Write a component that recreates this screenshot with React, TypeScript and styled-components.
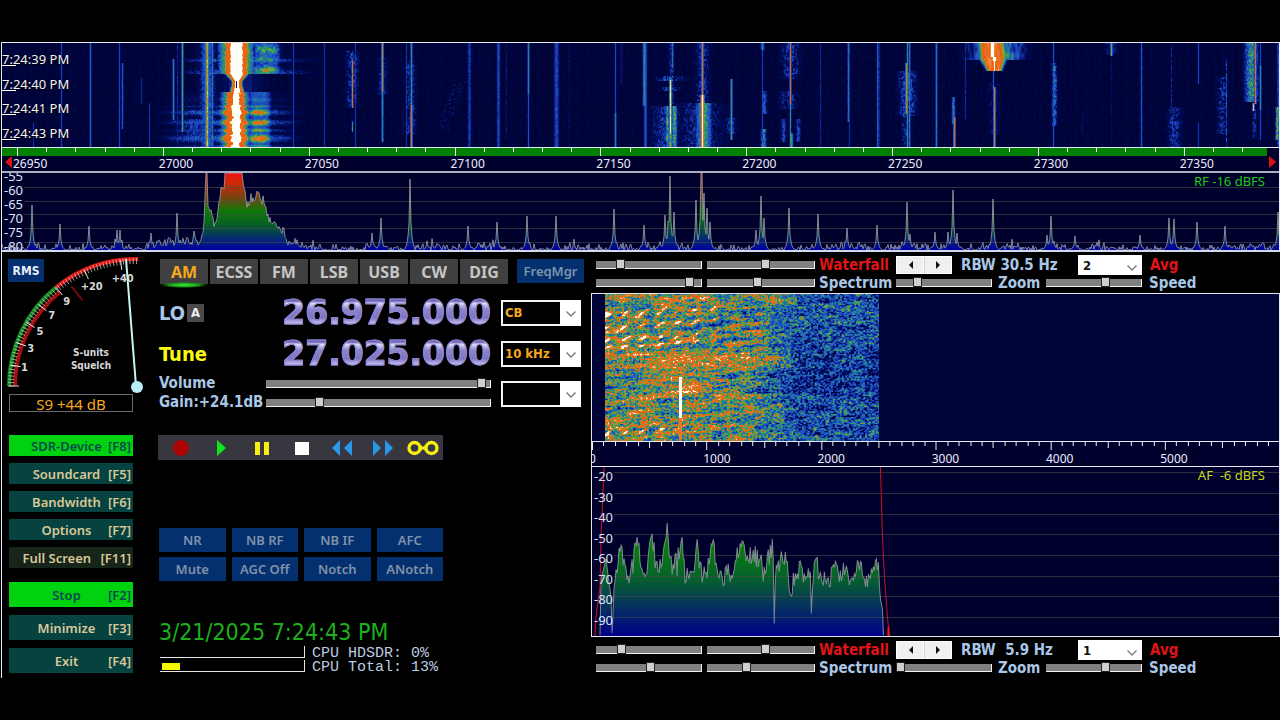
import React, { useMemo, useState } from "react";
import styled, { createGlobalStyle, css } from "styled-components";

/* ---------- theme values ---------- */

const sans = `"Noto Sans", "Open Sans", sans-serif`;
const wide = `"DejaVu Sans Condensed", "DejaVu Sans", "Noto Sans", sans-serif`;
const mono = `"Liberation Mono", "Courier New", monospace`;

const color = {
  ice: "#a9c6e6",
  navy: "#00002c",
  line: "#e6e6f4",
  orange: "#f5a91c",
  blueButton: "#04306f",
  green: "#00d210",
  teal: "#06423f",
};

const GlobalStyle = createGlobalStyle`
  *, *::before, *::after { box-sizing: border-box; }
  body { margin: 0; background: #000; color: #ddd; font-family: ${sans}; }
  button, select, input { font-family: inherit; margin: 0; }
  ol, ul { list-style: none; margin: 0; padding: 0; }
`;

/* ---------- heat map helpers ---------- */

type Heat = (x: number, y: number) => number;

const LEVELS = 28;

const stops: [number, number, number, number][] = [
  [0, 0, 0, 46],
  [0.15, 0, 12, 88],
  [0.3, 28, 68, 196],
  [0.42, 34, 112, 176],
  [0.53, 50, 160, 84],
  [0.62, 150, 160, 50],
  [0.7, 232, 92, 16],
  [0.84, 240, 120, 40],
  [0.92, 255, 224, 170],
  [1, 255, 255, 250],
];

function heatColor(level: number) {
  const v = level / (LEVELS - 1);
  let i = 1;
  while (i < stops.length - 1 && stops[i][0] < v) i++;
  const a = stops[i - 1];
  const b = stops[i];
  const t = (v - a[0]) / (b[0] - a[0]);
  const mix = (k: number) => Math.round(a[k] + (b[k] - a[k]) * t);
  return `rgb(${mix(1)},${mix(2)},${mix(3)})`;
}

function hash(x: number, y: number) {
  let h = (Math.imul(x | 0, 374761393) + Math.imul(y | 0, 668265263)) | 0;
  h = Math.imul(h ^ (h >>> 13), 1274126177);
  return ((h ^ (h >>> 16)) >>> 0) / 4294967295;
}

function smooth(x: number, y: number) {
  const xi = Math.floor(x);
  const yi = Math.floor(y);
  const fx = x - xi;
  const fy = y - yi;
  const sx = fx * fx * (3 - 2 * fx);
  const sy = fy * fy * (3 - 2 * fy);
  const top = hash(xi, yi) * (1 - sx) + hash(xi + 1, yi) * sx;
  const bottom = hash(xi, yi + 1) * (1 - sx) + hash(xi + 1, yi + 1) * sx;
  return top * (1 - sy) + bottom * sy;
}

const bell = (d: number, w: number) => Math.exp(-((d / w) * (d / w)));

function heatPaths(width: number, height: number, cell: number, heat: Heat) {
  const paths: string[][] = Array.from({ length: LEVELS }, () => []);
  for (let x = 0; x < width; x += cell) {
    let start = 0;
    let last = -1;
    for (let y = 0; y <= height; y++) {
      const v = y < height ? Math.max(0, Math.min(1, heat(x, y))) : -1;
      const level = v < 0 ? -1 : Math.round(v * (LEVELS - 1));
      if (level !== last) {
        if (last > 0) paths[last].push(`M${x} ${start}h${cell}v${y - start}h-${cell}z`);
        start = y;
        last = level;
      }
    }
  }
  return paths.map((p) => p.join(""));
}

/* ---------- RF waterfall content ---------- */

interface Carrier {
  x: number;
  v: number;
  w?: number;
  from?: number;
  to?: number;
  rough?: number;
}

const carriers: Carrier[] = [
  { x: 31, v: 0.3, from: 80, rough: 0.6 },
  { x: 59, v: 0.3 },
  { x: 88, v: 0.38 },
  { x: 117, v: 0.3 },
  { x: 120, v: 0.36, from: 20, to: 85 },
  { x: 139, v: 0.24, from: 35, to: 60 },
  { x: 147, v: 0.26, from: 60 },
  { x: 171, v: 0.48, from: 16, to: 76 },
  { x: 175, v: 0.27, rough: 0.4 },
  { x: 180, v: 0.56, to: 88 },
  { x: 204, v: 0.6, w: 2, rough: 0.15 },
  { x: 205, v: 0.46, w: 6, rough: 0.5 },
  { x: 205, v: 0.9 },
  { x: 210, v: 0.44 },
  { x: 192, v: 0.36, w: 12, from: 76, to: 95, rough: 0.7 },
  { x: 291, v: 0.28 },
  { x: 322, v: 0.25 },
  { x: 350, v: 0.76, w: 1, from: 17, to: 64, rough: 0.2 },
  { x: 350, v: 0.42, w: 5, from: 8, to: 64, rough: 0.95 },
  { x: 350, v: 0.6, w: 1, from: 78, to: 88, rough: 0.5 },
  { x: 353, v: 0.26 },
  { x: 380, v: 0.72, to: 48, rough: 0.15 },
  { x: 380, v: 0.5, from: 48, to: 98 },
  { x: 380, v: 0.36, w: 4, from: 15, to: 50, rough: 0.9 },
  { x: 404, v: 0.3, rough: 0.3 },
  { x: 409, v: 0.54, to: 72, rough: 0.2 },
  { x: 409, v: 0.74, from: 62 },
  { x: 408, v: 0.34, w: 5, from: 18, to: 90, rough: 0.85 },
  { x: 467, v: 0.32, w: 2, rough: 0.3 },
  { x: 496, v: 0.34, w: 2, rough: 0.25 },
  { x: 504, v: 0.22, to: 95, rough: 0.5 },
  { x: 526, v: 0.48, to: 50 },
  { x: 526, v: 0.34 },
  { x: 554, v: 0.34, w: 3, rough: 0.25 },
  { x: 567, v: 0.22, rough: 0.8 },
  { x: 613, v: 0.32, to: 70 },
  { x: 613, v: 0.46, from: 70 },
  { x: 619, v: 0.2, to: 40 },
  { x: 642, v: 0.5, w: 2, to: 62, rough: 0.15 },
  { x: 643, v: 0.36, w: 2 },
  { x: 670, v: 0.5, to: 24, rough: 0.3 },
  { x: 669, v: 0.34, w: 3, to: 60, rough: 0.6 },
  { x: 668, v: 0.62, w: 9, from: 33, to: 37, rough: 0.9 },
  { x: 668, v: 0.56, w: 7, from: 44, to: 47, rough: 0.9 },
  { x: 668, v: 0.8, w: 1, from: 44, to: 56 },
  { x: 668, v: 0.96, from: 37, to: 90 },
  { x: 665, v: 0.66, w: 2, from: 63, rough: 0.5 },
  { x: 672, v: 0.68, w: 3, from: 63, rough: 0.5 },
  { x: 668, v: 0.72, w: 2, from: 90, rough: 0.3 },
  { x: 664, v: 0.34, w: 13, from: 63, rough: 0.7 },
  { x: 700, v: 0.72, to: 58 },
  { x: 700, v: 0.36, w: 6, to: 58, rough: 0.85 },
  { x: 700, v: 1.05, w: 2, from: 52 },
  { x: 701, v: 0.66, w: 6, from: 60, rough: 0.4 },
  { x: 698, v: 0.32, w: 20, from: 60, rough: 0.8 },
  { x: 729, v: 0.54, from: 36, to: 96 },
  { x: 729, v: 0.36, w: 5, from: 75, to: 90, rough: 0.8 },
  { x: 760, v: 0.34, w: 1, rough: 0.3 },
  { x: 762, v: 0.48, w: 3, from: 48, to: 70, rough: 0.7 },
  { x: 761, v: 0.6, w: 3, from: 86, rough: 0.6 },
  { x: 760, v: 0.5, w: 2, to: 6, rough: 0.3 },
  { x: 788, v: 0.74, w: 1, to: 60 },
  { x: 788, v: 0.54, w: 1, from: 60, rough: 0.2 },
  { x: 788, v: 0.36, w: 8, to: 35, rough: 0.85 },
  { x: 786, v: 0.34, w: 8, from: 48, to: 65, rough: 0.9 },
  { x: 781, v: 0.38, w: 3, from: 76, to: 98, rough: 0.6 },
  { x: 796, v: 0.38, w: 3, from: 76, to: 98, rough: 0.6 },
  { x: 789, v: 0.62, w: 2, from: 90, rough: 0.4 },
  { x: 818, v: 0.24, rough: 0.3 },
  { x: 846, v: 0.46, to: 78, rough: 0.2 },
  { x: 847, v: 0.25 },
  { x: 875, v: 0.36, w: 1 },
  { x: 876, v: 0.3, w: 2, rough: 0.3 },
  { x: 904, v: 0.7, from: 20, to: 70, rough: 0.1 },
  { x: 905, v: 0.5, w: 1 },
  { x: 907, v: 0.44 },
  { x: 905, v: 0.46, w: 7, from: 28, to: 72, rough: 0.75 },
  { x: 904, v: 0.36, w: 4, from: 72, rough: 0.8 },
  { x: 934, v: 0.44 },
  { x: 951, v: 0.5, w: 2, from: 54, to: 80, rough: 0.4 },
  { x: 952, v: 0.74, from: 74 },
  { x: 963, v: 0.28, to: 75, rough: 0.4 },
  { x: 991, v: 0.34, from: 25, to: 46 },
  { x: 992, v: 0.72, from: 44 },
  { x: 992, v: 0.24, w: 6, from: 40, to: 90, rough: 0.9 },
  { x: 1051, v: 0.34 },
  { x: 1052, v: 0.52, w: 3, from: 20, to: 82, rough: 0.75 },
  { x: 1080, v: 0.2, from: 70, to: 90, rough: 0.5 },
  { x: 1109, v: 0.62, to: 12 },
  { x: 1109, v: 0.3, w: 6, to: 10, rough: 0.8 },
  { x: 1109, v: 0.2, rough: 0.6 },
  { x: 1139, v: 0.35 },
  { x: 1169, v: 0.3, w: 1, rough: 0.7 },
  { x: 1172, v: 0.36, w: 6, from: 64, rough: 0.85 },
  { x: 1196, v: 0.3, to: 40 },
  { x: 1196, v: 0.27, from: 80 },
  { x: 1224, v: 0.5, w: 1, from: 15, rough: 0.8 },
  { x: 1220, v: 0.34, w: 5, from: 34, to: 90, rough: 0.9 },
  { x: 1249, v: 0.64, w: 5, to: 58, rough: 0.55 },
  { x: 1253, v: 0.8, w: 1, to: 60, rough: 0.2 },
  { x: 1251, v: 0.9, w: 1, from: 60, to: 67 },
  { x: 1252, v: 0.34, w: 3, from: 66, to: 94, rough: 0.8 },
  { x: 1258, v: 0.48, from: 22, to: 66 },
  { x: 1258, v: 0.3, to: 96 },
  { x: 1276, v: 0.36, w: 2, rough: 0.4 },
  { x: 1275, v: 0.8, w: 2, from: 64, to: 96, rough: 0.6 },
];

/* speech bursts of the strong station: row, width, strength */
const bursts: [number, number, number][] = [
  [56, 3, 0.35],
  [63, 1.5, 0.55],
  [69, 3, 0.95],
  [79, 3, 1],
  [87, 2, 0.75],
  [95, 4, 1.05],
  [103, 2, 0.6],
];

function strongStation(x: number, y: number) {
  if (x < 130 || x > 350) return 0;
  const grain = hash(x, y);
  const block = smooth(x / 2, y / 2);
  if (y >= 31 && y < 49) {
    const squeeze = Math.abs(y - 41);
    const half = y < 41 ? 2.5 + Math.max(0, squeeze - 3) * 0.9 : 2.5 + squeeze * 0.3;
    const d = Math.abs(x - 234.5);
    if (x === 234 && squeeze < 4) return 0.15;
    return Math.max(1.1 * Math.exp(-Math.pow(d / half, 4)), 0.78 * Math.exp(-Math.pow(d / (half + 3), 6)), 0.2 * bell(x - 238, 26));
  }
  if (y < 31) {
    const d = x < 233 ? 233 - x : x - 235;
    const trim = block * 2.5;
    const core = 1.2 * Math.exp(-Math.pow(d / (7.5 - trim * 0.6), 4));
    const ring = 0.76 * Math.exp(-Math.pow(d / (13 - trim), 10));
    const halo = 0.53 * Math.exp(-Math.pow(d / (16 + trim), 8)) * (0.88 + 0.2 * grain);
    const row = 0.55 + 0.45 * bell(y - 6, 5) + 0.35 * bell(y - 16, 3) + 0.55 * bell(y - 27, 4);
    const lobe = 0.54 * Math.min(1.1, row) * Math.exp(-Math.pow((x - 264) / 14, 4)) * (0.68 + 0.55 * block);
    const wideBand = (0.3 * bell(y - 17, 2) + 0.32 * bell(y - 30, 4) + 0.12) * bell(x - 240, 58) * (0.6 + 0.7 * grain);
    return Math.max(core, ring, halo, lobe, wideBand);
  }
  const pulse = bursts.reduce((s, [row, w, p]) => Math.max(s, p * bell(y - row, w)), 0.15);
  const d = x < 234 ? 234 - x : (x - 234) * 1.2;
  const core = 1.2 * Math.exp(-Math.pow(d / (4.5 + pulse * 3 + (block - 0.5) * 4), 4));
  const ring = (0.76 + 0.1 * (block - 0.5)) * Math.exp(-Math.pow(d / (10.5 + pulse * 6 + (grain - 0.5) * 2), 8));
  const halo = 0.52 * Math.exp(-Math.pow(d / (15 + pulse * 7), 6)) * (0.85 + 0.25 * grain);
  const lobe = (0.28 + 0.46 * pulse) * Math.exp(-Math.pow((x - 257) / 12, 4)) * (0.82 + 0.35 * block);
  const wideBand = (0.08 + 0.32 * pulse) * Math.exp(-Math.pow((x - 228) / 66, 4)) * (0.6 + 0.55 * grain);
  return Math.max(core, ring, halo, lobe, wideBand);
}

function upperStation(x: number, y: number) {
  if (x < 940 || x > 1040 || y > 27) return 0;
  const d = Math.abs(x - 992 + (y - 27) * -0.12);
  const w = y < 15 ? 14 : 14 - (y - 15) * 0.5;
  const strand = 0.8 + 0.28 * smooth(x / 2, y / 9);
  const core = 0.84 * Math.exp(-Math.pow(d / w, 6)) * strand;
  const white = 1.1 * bell(x - 992 + (y < 14 ? 2 : 0), y < 18 ? 4 : 1.6);
  const side = y < 17 ? 0.6 * bell(x - 994, 26) * (0.45 + 0.8 * smooth(x / 2 + 40, y / 6)) : 0;
  return Math.max(core, white, side);
}

function buildRfHeat(): Heat {
  const byColumn: Carrier[][] = Array.from({ length: 1280 }, () => []);
  carriers.forEach((c) => {
    const reach = Math.max(1, Math.ceil((c.w ?? 0) * 1.8));
    for (let x = Math.max(0, c.x - reach); x <= Math.min(1279, c.x + reach); x++) byColumn[x].push(c);
  });
  return (x, y) => {
    let v = 0.03 + 0.07 * hash(x, y >> 2) * hash(x, 3);
    byColumn[x].forEach((c) => {
      if (y < (c.from ?? 0) || y > (c.to ?? 200)) return;
      const shape = c.w ? bell(x - c.x, c.w) : x === c.x ? 1 : 0.5;
      const rough = c.rough ?? 0.1;
      v = Math.max(v, c.v * (c.w && c.w > 3 ? Math.sqrt(shape) : shape) * (1 - rough * smooth(x * 0.8 + 9, y * 0.6)));
    });
    const diagonal = Math.abs(x - (456 - (y - 42) * 0.36));
    if (y > 38 && y < 88 && diagonal < 6 && hash(x, y) > 0.8) v = Math.max(v, 0.2);
    return Math.max(v, strongStation(x, y), upperStation(x, y));
  };
}

/* ---------- AF waterfall content ---------- */

const voicedRows: [number, number][] = [
  [21, 4],
  [33, 3],
  [46, 3.5],
  [53, 2],
  [139, 3],
];

function afHeat(x: number, y: number) {
  const left = 13;
  const right = 286;
  if (x < left || x > right) return 0.02;
  const t = (x - left) / (right - left);
  let v = t < 0.55 ? 0.52 - t * 0.1 : t < 0.72 ? 0.465 - (t - 0.55) * 0.75 : 0.335;
  v += (smooth(x / 14, y / 2.4 + x / 60) - 0.5) * (t < 0.6 ? 0.36 : 0.22);
  v += (smooth(x / 1.8 + 60, y / 1.4 + 30) - 0.5) * 0.5;
  v += (hash(x + 7, y) - 0.5) * 0.12;
  if (y < 12 && t > 0.05 && t < 0.7) v += 0.14 * bell(y - 5, 6);
  if (t < 0.42 && (y < 60 || y > 130)) {
    voicedRows.forEach(([row, h]) => {
      const slope = row - Math.max(0, t - 0.05) * 22;
      const lane = bell(((x - 22 + (y - row) * 1.1 + 32) % 16.5) - 8, 2.6);
      v += 0.55 * lane * bell(y - slope, h) * (1 - t);
    });
  }
  if (y > 14 && y < 52 && t < 0.6) v += 0.12 * bell(((y + x / 8) % 9) - 4, 2);
  v += 0.24 * bell(y - 66, 10) * (t < 0.68 ? bell(t - 0.45, 0.35) : 0);
  v += 0.24 * bell(y - 62, 7) * bell(t - 0.26, 0.07);
  v += 0.22 * bell(y - 90, 12) * bell(t - 0.27, 0.12);
  if (y > 96 && t < 0.65) v += 0.13 * bell(((y + x / 8) % 13) - 6, 3);
  if (y > 75 && y < 100) v -= 0.08 * (bell(t, 0.12) + bell(t - 0.58, 0.14));
  v -= 0.12 * bell(y - 80, 22) * (t > 0.6 ? Math.min(1, (t - 0.6) * 6) : 0);
  if (x >= 87 && x <= 89 && y >= 83) v = y < 124 ? 1 : 0.8;
  return Math.max(0.06, v);
}

/* ---------- spectrum traces ---------- */

type Point = [number, number];

const rfPeaks: Point[] = [
  [30, 32], [58, 51], [87, 53], [115, 57], [118, 57], [149, 60], [175, 40], [192, 58],
  [370, 60], [379, 45], [408, 6], [466, 53], [495, 49], [525, 43], [554, 43], [612, 36],
  [642, 52], [663, 42], [666, 48], [668, 3], [672, 39], [694, 27], [699, 0], [700, 0], [702, 20],
  [705, 35], [708, 49], [754, 57], [759, 23], [762, 45], [787, 35], [816, 41], [845, 55],
  [875, 52], [905, 29], [908, 61], [933, 59], [946, 59], [951, 17], [955, 60], [991, 26],
  [1045, 62], [1049, 43], [1073, 63], [1095, 69], [1138, 62], [1167, 45], [1172, 46],
  [1195, 49], [1223, 53], [1276, 39],
];

const rfHump: Point[] = [
  [140, 76], [160, 69], [193, 68], [199, 70], [202, 52], [204, 0], [205, 0], [206, 32], [209, 38], [212, 52],
  [215, 42], [219, 17], [222, 14], [223, 0], [240, 0], [242, 12], [245, 34], [249, 25], [252, 27],
  [256, 17], [259, 28], [262, 26], [265, 41], [270, 53], [275, 50], [279, 56], [283, 60], [286, 74], [296, 68], [304, 76],
];

const afShape: Point[] = [
  [8, 168], [9, 112], [14, 92], [16, 108], [19, 130], [20, 166], [23, 108], [29, 80], [34, 106],
  [38, 112], [41, 94], [45, 70], [49, 94], [53, 108], [57, 76], [60, 67], [63, 94], [68, 100],
  [73, 84], [75, 56], [77, 84], [80, 101], [86, 90], [90, 78], [94, 108], [100, 98], [102, 104],
  [105, 72], [108, 104], [114, 112], [117, 90], [121, 73], [125, 106], [130, 112], [136, 98],
  [139, 112], [145, 88], [150, 74], [154, 94], [160, 86], [166, 92], [172, 100], [177, 90],
  [180, 78], [181, 100], [182, 156], [183, 106], [189, 94], [195, 93], [198, 124], [203, 108], [208, 101],
  [214, 112], [218, 110], [219, 142], [220, 110], [224, 90], [227, 112], [235, 116], [240, 106], [245, 100],
  [249, 110], [254, 96], [258, 114], [263, 104], [268, 100], [273, 112], [278, 114], [282, 96],
  [286, 105], [288, 132], [290, 142], [291, 168],
];

function interpolate(points: Point[], x: number) {
  for (let i = 1; i < points.length; i++) {
    if (x <= points[i][0]) {
      const [ax, ay] = points[i - 1];
      const [bx, by] = points[i];
      return ay + ((by - ay) * (x - ax)) / (bx - ax);
    }
  }
  return points[points.length - 1][1];
}

function rfTrace() {
  const floor = 77;
  const out: string[] = [];
  for (let x = 0; x < 1278; x++) {
    const burst = smooth(x / 22, 5) > 0.55 ? 1 : 0;
    let y = floor + 2 - hash(x, 41) * 5 - (hash(x, 42) > 0.86 ? 4 : 0) - burst * hash(x, 44) * 5;
    if (x > 140 && x < 304) {
      const h = interpolate(rfHump, x);
      y = Math.min(y, h + (h > 4 ? (hash(x, 43) - 0.5) * 9 : 0));
    }
    rfPeaks.forEach(([px, py]) => {
      const d = Math.abs(px - x);
      if (d < 5) y = Math.min(y, d < 1 ? py : floor - (floor - py) * (0.75 * Math.exp(-d / 1.5)));
    });
    out.push(`${x} ${Math.max(0, Math.min(floor, y)).toFixed(1)}`);
  }
  return out;
}

function afTrace() {
  const out: string[] = [];
  for (let x = 8; x <= 291; x++) {
    const y = interpolate(afShape, x);
    const dip = hash(x, 19) > 0.92 ? 8 : 0;
    const jitter = x > 21 && x < 287 && y > 74 ? (hash(x, 77) - 0.5) * 20 + dip : 0;
    out.push(`${x} ${Math.min(168, y + jitter).toFixed(1)}`);
  }
  return out;
}

/* ---------- layout ---------- */

const Page = styled.main`
  min-height: 100vh;
  padding: 42px 0;
  background: #000;
`;

const Shell = styled.div`
  margin-left: 1px;
  border-left: 1px solid ${color.line};
`;

const RfPanel = styled.section`
  border-top: 1px solid ${color.line};
  border-bottom: 2px solid #d4d8ec;
  border-right: 1px solid ${color.line};
  background: ${color.navy};
`;

const Plot = styled.div<{ $height: number }>`
  position: relative;
  height: ${(p) => p.$height}px;
  overflow: hidden;
  background: ${color.navy};
`;

const Drawing = styled.svg`
  display: block;
  width: 100%;
  height: 100%;
`;

const TimeList = styled.ol`
  position: absolute;
  top: 4px;
  left: 0;
  display: grid;
  grid-template-rows: repeat(4, 1fr);
  align-items: center;
  height: 98px;
`;

const TimeMark = styled.li`
  position: relative;
  font-size: 13px;
  line-height: 24px;
  color: #f2f2ff;
  text-shadow: 0 0 2px #000, 0 1px 2px #000;

  &::after {
    content: "";
    position: absolute;
    left: 0;
    bottom: 5px;
    width: 14px;
    height: 1px;
    background: #fff;
  }
`;

const RfRuler = styled.div`
  border-top: 1px solid ${color.line};
  border-bottom: 2px solid #a9aec0;
  background: ${color.navy};
`;

const RulerBand = styled.div`
  height: 8px;
  margin-right: 12px;
  background: #028002;
`;

const RulerLabels = styled.div`
  position: relative;
  display: flex;
  height: 15px;
  line-height: 16px;
  font-size: 12px;
  color: #eef;
  padding-left: 11px;
  overflow: hidden;
`;

const RulerLabel = styled.span<{ $pitch: string }>`
  flex: 0 0 ${(p) => p.$pitch};
`;

const EdgeArrow = styled.svg<{ $side: "left" | "right" }>`
  position: absolute;
  top: 0;
  ${(p) => p.$side}: 3px;
  width: 8px;
  height: 12px;
  fill: #e01010;
`;

const LevelLabels = styled.ol<{ $top: number; $height: number }>`
  position: absolute;
  top: ${(p) => p.$top}px;
  left: 2px;
  height: ${(p) => p.$height}px;
  display: flex;
  flex-direction: column;
  justify-content: space-between;
  font-size: 13px;
  line-height: 14px;
  color: #dfe3f2;
`;

const Readout = styled.output<{ $color: string }>`
  position: absolute;
  top: 0;
  right: 14px;
  font-size: 13px;
  line-height: 17px;
  white-space: pre;
  color: ${(p) => p.$color};
`;

const Console = styled.div`
  display: grid;
  grid-template-columns: 156px 433px minmax(0, 1fr);
`;

const Sidebar = styled.aside`
  min-width: 0;
`;

const MeterBox = styled.div`
  position: relative;
  height: 142px;
`;

const MeterDrawing = styled.svg`
  display: block;
  width: 144px;
  height: 142px;
  font-family: ${wide};
  font-weight: 700;
  fill: #d8d8d8;
`;

const RmsButton = styled.button`
  position: absolute;
  top: 7px;
  left: 6px;
  width: 36px;
  height: 23px;
  padding: 0;
  border: 0;
  background: ${color.blueButton};
  color: #e8eef8;
  font-family: ${wide};
  font-size: 12px;
  font-weight: 700;
`;

const LevelBox = styled.output`
  display: block;
  width: 124px;
  height: 18px;
  margin-left: 7px;
  border: 1px solid #6a6a6a;
  font-size: 15px;
  line-height: 18px;
  text-align: center;
  color: ${color.orange};
`;

const NavList = styled.nav`
  display: flex;
  flex-direction: column;
  gap: 7px;
  width: 124px;
  margin: 23px 0 0 7px;
`;

const NavGroup = styled(NavList)`
  gap: 8px;
  margin-top: 14px;
`;

const NavButton = styled.button<{ $tone?: "on" | "dim"; $tall?: boolean; $inset?: number }>`
  display: flex;
  align-items: center;
  height: ${(p) => (p.$tall ? 25 : 21)}px;
  padding: 0 2px 0 ${(p) => p.$inset ?? 16}px;
  border: 0;
  background: ${(p) => (p.$tone === "on" ? color.green : p.$tone === "dim" ? "#16241a" : color.teal)};
  color: ${(p) => (p.$tone === "on" ? "#064a4c" : "#d8c898")};
  font-size: 13px;
  font-weight: 600;
  white-space: nowrap;
`;

const NavName = styled.span`
  flex: 1;
  text-align: center;
`;

const Radio = styled.section`
  padding: 7px 10px 0 0;
`;

const ModeRow = styled.div`
  display: flex;
  gap: 2px;
  margin: 0 0 8px 2px;
`;

const ModeButton = styled.button<{ $active?: boolean }>`
  position: relative;
  flex: none;
  width: 48px;
  height: 25px;
  padding: 0;
  border: 0;
  background: #404040;
  color: ${(p) => (p.$active ? color.orange : "#c6c6c6")};
  font-size: 16px;
  line-height: 24px;
  font-weight: 700;

  ${(p) =>
    p.$active &&
    css`
      &::after {
        content: "";
        position: absolute;
        left: 0;
        right: 0;
        bottom: -4px;
        height: 6px;
        border-radius: 50%;
        background: radial-gradient(closest-side, #3cf03c, #18a018 60%, transparent);
      }
    `}
`;

const FreqManager = styled.button`
  flex: none;
  width: 67px;
  height: 24px;
  margin-left: 7px;
  padding: 0;
  border: 0;
  background: ${color.blueButton};
  color: #7e93ac;
  font-size: 13px;
  font-weight: 600;
`;

const TuneRow = styled.div`
  display: flex;
  align-items: center;
  height: 41px;
  padding-left: 1px;
`;

const TuneLabel = styled.div<{ $color: string }>`
  display: flex;
  align-items: center;
  gap: 2px;
  flex: 1;
  color: ${(p) => p.$color};
  font-family: ${wide};
  font-size: 20px;
  font-weight: 700;
`;

const AutoButton = styled.button`
  width: 17px;
  height: 18px;
  padding: 0;
  border: 0;
  background: #4a4a4a;
  color: #eee;
  font-size: 13px;
  line-height: 18px;
  font-weight: 700;
`;

const Digits = styled.output`
  font-family: "DejaVu Sans", sans-serif;
  font-size: 33px;
  line-height: 40px;
  font-weight: 700;
  color: transparent;
  -webkit-text-stroke: 1px #8f88d0;
  background: linear-gradient(#6c63b4 20%, #dcdcfa 26%, #8d86cc 40%, #7c74c4 62%, #c4c0f0 76%, #7068b8 84%);
  background-clip: text;
  -webkit-background-clip: text;
`;

const PickerWrap = styled.div`
  position: relative;
  width: 80px;
  height: 26px;
  margin-left: 10px;
`;

const Picker = styled.select`
  appearance: none;
  display: block;
  width: 100%;
  height: 100%;
  padding: 0 22px 0 2px;
  border: 2px solid #f4f4f4;
  border-radius: 0;
  background: #000;
  color: ${color.orange};
  font-family: ${wide};
  font-size: 13px;
  font-weight: 700;
`;

const PickerArrow = styled.svg`
  position: absolute;
  top: 0;
  right: 0;
  width: 21px;
  height: 26px;
  background: #fff;
  pointer-events: none;
`;

const GainRow = styled(TuneRow)`
  align-items: flex-start;
`;

const GainList = styled.div`
  flex: 1;
`;

const GainItem = styled.label`
  display: flex;
  align-items: center;
  justify-content: space-between;
  height: 19px;
  color: ${color.ice};
  font-family: ${wide};
  font-size: 15px;
  line-height: 19px;
  font-weight: 700;
`;

const GainPicker = styled(PickerWrap)`
  margin-top: 7px;
`;

const Slider = styled.input.attrs({ type: "range" })<{ $width: number }>`
  appearance: none;
  flex: none;
  width: ${(p) => p.$width}px;
  height: 12px;
  background: transparent;

  &::-webkit-slider-runnable-track {
    height: 8px;
    border: solid #f0f0f0;
    border-width: 0 1px 1px 0;
    background: #808080;
  }

  &::-webkit-slider-thumb {
    appearance: none;
    width: 9px;
    height: 10px;
    margin-top: -2px;
    border: 1px solid #222;
    background: #cfcfcf;
  }
`;

const Transport = styled.div`
  display: grid;
  grid-template-columns: repeat(7, 1fr);
  width: 285px;
  height: 25px;
  margin-top: 20px;
  padding-left: 3px;
  background: #38373f;
`;

const TransportButton = styled.button`
  display: grid;
  place-items: center;
  padding: 0;
  border: 0;
  background: none;
`;

const FeatureGrid = styled.div`
  display: grid;
  grid-template-columns: repeat(4, 1fr);
  gap: 5px 6px;
  width: 284px;
  margin: 68px 0 0 1px;
`;

const FeatureButton = styled.button`
  height: 24px;
  padding: 0;
  border: 0;
  background: ${color.blueButton};
  color: #8092aa;
  font-size: 13px;
  font-weight: 600;
`;

const Clock = styled.time`
  display: block;
  margin: 37px 0 0 1px;
  font-family: ${wide};
  font-size: 23px;
  line-height: 28px;
  color: #1cb01c;
`;

const LoadRow = styled.div`
  display: flex;
  align-items: flex-start;
  gap: 7px;
  height: 14px;
  padding-left: 2px;
  font-family: ${mono};
  font-size: 15px;
  line-height: 16px;
  color: #bccbe0;
  white-space: pre;
`;

const LoadBar = styled.div`
  width: 145px;
  height: 12px;
  padding: 3px 2px 1px;
  border: solid #e8e8e8;
  border-width: 0 1px 1px 0;
`;

const LoadFill = styled.div`
  height: 100%;
  background: #f6f400;
`;

const Displays = styled.section`
  min-width: 0;
`;

const ControlBar = styled.div`
  padding: 3px 0 2px 5px;
  color: ${color.ice};
  font-family: ${wide};
  font-size: 15px;
  font-weight: 700;
`;

const ControlRow = styled.div<{ $height: number }>`
  display: flex;
  align-items: center;
  height: ${(p) => p.$height}px;
  line-height: ${(p) => p.$height}px;
`;

const SliderPair = styled.div`
  display: flex;
  gap: 5px;
  margin-right: 4px;
`;

const Caption = styled.span<{ $width?: number; $alert?: boolean }>`
  flex: none;
  width: ${(p) => (p.$width ? `${p.$width}px` : "auto")};
  white-space: pre;
  color: ${(p) => (p.$alert ? "#e01414" : "inherit")};
`;

const Stepper = styled.div`
  display: flex;
  width: 56px;
  height: 18px;
  margin-right: 9px;
  background: #f2f2f2;
`;

const StepButton = styled.button`
  flex: 1;
  display: grid;
  place-items: center;
  padding: 0;
  border: 1px solid #fff;
  background: #f0f0f0;

  & + & {
    border-left-color: #cfcfcf;
  }
`;

const AvgWrap = styled.div`
  position: relative;
  width: 64px;
  height: 20px;
  margin-right: 8px;
`;

const AvgPicker = styled.select`
  appearance: none;
  display: block;
  width: 100%;
  height: 100%;
  padding: 0 18px 0 5px;
  border: 0;
  border-radius: 0;
  background: #fff;
  color: #111;
  font-family: ${wide};
  font-size: 13px;
  font-weight: 700;
`;

const AvgArrow = styled.svg`
  position: absolute;
  top: 1px;
  right: 0;
  width: 20px;
  height: 20px;
  pointer-events: none;
`;

const ZoomCaption = styled(Caption)`
  padding-left: 6px;
`;

const SpeedCaption = styled(Caption)`
  padding-left: 7px;
`;

const AfPanel = styled.div`
  border: 1px solid ${color.line};
  background: ${color.navy};
`;

const AfRuler = styled.div`
  position: relative;
  height: 26px;
  border: solid ${color.line};
  border-width: 1px 0;
`;

const AfTicks = styled.div`
  height: 8px;
`;

const AfLabels = styled(RulerLabels)`
  height: 16px;
  line-height: 18px;
  padding-left: 0;
  text-indent: -3px;
`;

/* ---------- pieces ---------- */

function HeatMap({ width, height, cell, heat }: { width: number; height: number; cell: number; heat: Heat }) {
  const paths = useMemo(() => heatPaths(width, height, cell, heat), [width, height, cell, heat]);
  return (
    <Drawing viewBox={`0 0 ${width} ${height}`} preserveAspectRatio="none" shapeRendering="crispEdges" aria-hidden="true">
      <rect width={width} height={height} fill={heatColor(0)} />
      {paths.map((d, i) => (d ? <path key={i} d={d} fill={heatColor(i)} /> : null))}
    </Drawing>
  );
}

interface TraceProps {
  width: number;
  height: number;
  id: string;
  points: string[];
  gradient: [number, string][];
  grid: number[];
  children?: React.ReactNode;
}

function Trace({ width, height, id, points, gradient, grid, children }: TraceProps) {
  const first = points[0].split(" ")[0];
  const last = points[points.length - 1].split(" ")[0];
  return (
    <Drawing viewBox={`0 0 ${width} ${height}`} preserveAspectRatio="none" aria-hidden="true">
      <defs>
        <linearGradient id={id} gradientUnits="userSpaceOnUse" x1="0" y1="0" x2="0" y2={height}>
          {gradient.map(([at, c]) => (
            <stop key={at} offset={at} stopColor={c} />
          ))}
        </linearGradient>
      </defs>
      <path d={`M${first} ${height}L${points.join("L")}L${last} ${height}z`} fill={`url(#${id})`} />
      {grid.map((y) => (
        <path key={y} d={`M22 ${y + 0.5}H${width}`} stroke="#4a4a4c" strokeOpacity="0.62" />
      ))}
      <path d={`M${points.join("L")}`} fill="none" stroke="#a3a9ae" strokeOpacity="0.75" strokeWidth="1" />
      {children}
    </Drawing>
  );
}

function Ticks({ width, height, first, pitch, majorEvery, midEvery }: { width: number; height: number; first: number; pitch: number; majorEvery: number; midEvery?: number }) {
  const count = Math.floor((width - first) / pitch);
  let d = "";
  for (let i = 0; i <= count; i++) {
    const length = i % majorEvery === 0 ? height : midEvery && i % midEvery === 0 ? height - 2 : height / 2;
    d += `M${Math.round(first + i * pitch) + 0.5} 0v${length}`;
  }
  return (
    <Drawing viewBox={`0 0 ${width} ${height}`} preserveAspectRatio="none" aria-hidden="true">
      <path d={d} stroke="#eef0f4" />
    </Drawing>
  );
}

const PIVOT = { x: 134, y: 134 };

function polar(angle: number, r: number): Point {
  const a = (angle * Math.PI) / 180;
  return [PIVOT.x - Math.cos(a) * r, PIVOT.y - Math.sin(a) * r];
}

function arc(from: number, to: number, r: number) {
  return `M${polar(from, r).join(" ")}A${r} ${r} 0 0 1 ${polar(to, r).join(" ")}`;
}

const meterMarks: [number, string, number][] = [
  [9.5, "1", 113],
  [20, "3", 112],
  [30, "5", 111],
  [40, "7", 110],
  [51, "9", 110],
  [66, "+20", 109],
  [83, "+40", 109],
];

function Meter() {
  const comb = Array.from({ length: 60 }, (_, i) => i * 1.53)
    .map((a) => `M${polar(a, 122).join(" ")}L${polar(a, 128).join(" ")}`)
    .join("");
  return (
    <MeterDrawing viewBox="0 0 144 142" role="img" aria-label="Signal meter, S9 +44 dB">
      <path d={arc(0, 51, 127)} fill="none" stroke="#0c8a1c" strokeWidth="4" />
      <path d={arc(51, 91, 127)} fill="none" stroke="#e01818" strokeWidth="4" />
      <path d={arc(0, 51, 121)} fill="none" stroke="#a01010" strokeWidth="4" />
      <path d={comb} stroke="#e0d8d0" strokeOpacity="0.7" />
      {meterMarks.map(([a, label, r]) => (
        <React.Fragment key={label}>
          <path d={`M${polar(a, 117).join(" ")}L${polar(a, 127).join(" ")}`} stroke="#e6e6e6" />
          <text x={polar(a, r)[0]} y={polar(a, r)[1] + 4} textAnchor="middle" fontSize="11">
            {label}
          </text>
        </React.Fragment>
      ))}
      <path d={`M${polar(0, 127).join(" ")}H17`} stroke="#d8c8c8" />
      <path d={`M${polar(57, 119).join(" ")}L${polar(58, 101).join(" ")}`} stroke="#6c0c0c" strokeWidth="2" />
      <text x="89" y="104" textAnchor="middle" fontSize="10">
        S-units
      </text>
      <text x="89" y="117" textAnchor="middle" fontSize="10">
        Squelch
      </text>
      <path d={`M${PIVOT.x} ${PIVOT.y}L124 7`} stroke="#c4f4f4" strokeWidth="2" />
      <circle cx={PIVOT.x + 1} cy={PIVOT.y + 1} r="6" fill="#b8eef4" />
    </MeterDrawing>
  );
}

function BandPicker({ label, value, options, as: Wrap = PickerWrap }: { label: string; value: string; options: string[]; as?: React.ElementType }) {
  return (
    <Wrap>
      <Picker aria-label={label} defaultValue={value}>
        {options.map((o) => (
          <option key={o}>{o}</option>
        ))}
      </Picker>
      <PickerArrow viewBox="0 0 21 26" aria-hidden="true">
        <path d="M6.500 11.500l4.500 4.500 4.500-4.500" fill="none" stroke="#777" strokeWidth="1.300" />
      </PickerArrow>
    </Wrap>
  );
}

interface ControlsProps {
  name: string;
  rbw: string;
  avg: string;
  values: [number, number, number, number, number, number];
}

function Controls({ name, rbw, avg, values }: ControlsProps) {
  const [wfLow, wfHigh, spLow, spHigh, zoom, speed] = values;
  return (
    <ControlBar>
      <ControlRow $height={20}>
        <SliderPair>
          <Slider $width={106} defaultValue={wfLow} aria-label={`${name} waterfall low`} />
          <Slider $width={108} defaultValue={wfHigh} aria-label={`${name} waterfall high`} />
        </SliderPair>
        <Caption $width={77} $alert>Waterfall</Caption>
        <Stepper>
          <StepButton aria-label={`${name} previous`}>
            <svg width="5" height="8" viewBox="0 0 5 8"><path d="M5 0v8L1 4z" fill="#111" /></svg>
          </StepButton>
          <StepButton aria-label={`${name} next`}>
            <svg width="5" height="8" viewBox="0 0 5 8"><path d="M0 0v8l4-4z" fill="#111" /></svg>
          </StepButton>
        </Stepper>
        <Caption $width={117}>{rbw}</Caption>
        <AvgWrap>
          <AvgPicker aria-label={`${name} average`} defaultValue={avg}>
            <option>1</option>
            <option>2</option>
            <option>4</option>
          </AvgPicker>
          <AvgArrow viewBox="0 0 20 20" aria-hidden="true">
            <path d="M5.500 9.500l4.500 4.500 4.500-4.500" fill="none" stroke="#777" strokeWidth="1.300" />
          </AvgArrow>
        </AvgWrap>
        <Caption $alert>Avg</Caption>
      </ControlRow>
      <ControlRow $height={16}>
        <SliderPair>
          <Slider $width={106} defaultValue={spLow} aria-label={`${name} spectrum low`} />
          <Slider $width={108} defaultValue={spHigh} aria-label={`${name} spectrum high`} />
        </SliderPair>
        <Caption $width={77}>Spectrum</Caption>
        <Slider $width={96} defaultValue={zoom} aria-label={`${name} zoom`} />
        <ZoomCaption $width={54}>Zoom</ZoomCaption>
        <Slider $width={96} defaultValue={speed} aria-label={`${name} speed`} />
        <SpeedCaption>Speed</SpeedCaption>
      </ControlRow>
    </ControlBar>
  );
}

const transport = [
  { name: "Record", icon: <circle cx="8" cy="8" r="8" fill="#ac0404" />, width: 16 },
  { name: "Play", icon: <path d="M4 0l9 8-9 8z" fill="#0ce81c" />, width: 16 },
  { name: "Pause", icon: <path d="M1 2h5v13H1zM10 2h5v13h-5z" fill="#f6ee14" />, width: 16 },
  { name: "Stop playback", icon: <path d="M1 2h14v13H1z" fill="#fff" />, width: 16 },
  { name: "Rewind", icon: <path d="M10 0v16L2 8zM22 0v16l-8-8z" fill="#2a98ea" />, width: 24 },
  { name: "Forward", icon: <path d="M2 0v16l8-8zM14 0v16l8-8z" fill="#2a98ea" />, width: 24 },
  {
    name: "Loop",
    icon: (
      <g fill="none" stroke="#f6ee14" strokeWidth="3.400">
        <circle cx="7.500" cy="8" r="5.500" />
        <circle cx="24.500" cy="8" r="5.500" />
        <path d="M12 5l8 6M12 11l8-6" strokeWidth="2" />
      </g>
    ),
    width: 32,
  },
];

const rfLabels = ["26950", "27000", "27050", "27100", "27150", "27200", "27250", "27300", "27350"];
const afLabels = ["0", "1000", "2000", "3000", "4000", "5000"];
const modes = ["AM", "ECSS", "FM", "LSB", "USB", "CW", "DIG"];
const features = ["NR", "NB RF", "NB IF", "AFC", "Mute", "AGC Off", "Notch", "ANotch"];

export default function App() {
  const [mode, setMode] = useState("AM");
  const rfHeat = useMemo(buildRfHeat, []);
  const rfPoints = useMemo(rfTrace, []);
  const afPoints = useMemo(afTrace, []);

  return (
    <Page>
      <GlobalStyle />
      <Shell>
        <RfPanel>
          <Plot $height={104}>
            <HeatMap width={1277} height={104} cell={1} heat={rfHeat} />
            <TimeList>
              {["7:24:39 PM", "7:24:40 PM", "7:24:41 PM", "7:24:43 PM"].map((t) => (
                <TimeMark key={t}>{t}</TimeMark>
              ))}
            </TimeList>
          </Plot>
          <RfRuler>
            <RulerBand>
              <Ticks width={1265} height={8} first={15} pitch={29.17} majorEvery={5} />
            </RulerBand>
            <RulerLabels>
              <EdgeArrow $side="left" viewBox="0 0 8 12" aria-hidden="true">
                <path d="M7 0v12L0 6z" />
              </EdgeArrow>
              {rfLabels.map((l) => (
                <RulerLabel key={l} $pitch="11.52%">{l}</RulerLabel>
              ))}
              <EdgeArrow $side="right" viewBox="0 0 8 12" aria-hidden="true">
                <path d="M1 0v12l7-6z" />
              </EdgeArrow>
            </RulerLabels>
          </RfRuler>
          <Plot $height={77}>
            <Trace
              width={1277}
              height={77}
              id="rf-fill"
              points={rfPoints}
              gradient={[[0, "#f01010"], [0.12, "#d02808"], [0.3, "#804010"], [0.5, "#0c7808"], [0.68, "#065c28"], [0.85, "#042c70"], [1, "#0000a0"]]}
              grid={[14, 28, 41, 55, 69]}
            />
            <LevelLabels $top={-4} $height={83}>
              {["-55", "-60", "-65", "-70", "-75", "-80"].map((l) => (
                <li key={l}>{l}</li>
              ))}
            </LevelLabels>
            <Readout $color="#1ccc1c">RF -16 dBFS</Readout>
          </Plot>
        </RfPanel>

        <Console>
          <Sidebar>
            <MeterBox>
              <Meter />
              <RmsButton>RMS</RmsButton>
            </MeterBox>
            <LevelBox>S9 +44 dB</LevelBox>
            <NavList aria-label="Settings">
              <NavButton $tone="on"><NavName>SDR-Device</NavName>[F8]</NavButton>
              <NavButton><NavName>Soundcard</NavName>[F5]</NavButton>
              <NavButton><NavName>Bandwidth</NavName>[F6]</NavButton>
              <NavButton><NavName>Options</NavName>[F7]</NavButton>
              <NavButton $tone="dim" $inset={4}><NavName>Full Screen</NavName>[F11]</NavButton>
            </NavList>
            <NavGroup aria-label="Program">
              <NavButton $tone="on" $tall><NavName>Stop</NavName>[F2]</NavButton>
              <NavButton $tall><NavName>Minimize</NavName>[F3]</NavButton>
              <NavButton $tall><NavName>Exit</NavName>[F4]</NavButton>
            </NavGroup>
          </Sidebar>

          <Radio>
            <ModeRow>
              {modes.map((m) => (
                <ModeButton key={m} $active={m === mode} onClick={() => setMode(m)}>{m}</ModeButton>
              ))}
              <FreqManager>FreqMgr</FreqManager>
            </ModeRow>
            <TuneRow>
              <TuneLabel $color={color.ice}>LO<AutoButton>A</AutoButton></TuneLabel>
              <Digits>26.975.000</Digits>
              <BandPicker label="Band" value="CB" options={["CB", "20m", "40m"]} />
            </TuneRow>
            <TuneRow>
              <TuneLabel $color="#fbfb10">Tune</TuneLabel>
              <Digits>27.025.000</Digits>
              <BandPicker label="Step" value="10 kHz" options={["1 kHz", "5 kHz", "10 kHz"]} />
            </TuneRow>
            <GainRow>
              <GainList>
                <GainItem>Volume<Slider $width={225} defaultValue={98} /></GainItem>
                <GainItem>Gain:+24.1dB<Slider $width={225} defaultValue={23} /></GainItem>
              </GainList>
              <BandPicker as={GainPicker} label="Preset" value="" options={[""]} />
            </GainRow>
            <Transport>
              {transport.map((t) => (
                <TransportButton key={t.name} aria-label={t.name}>
                  <svg width={t.width} height="16" viewBox={`0 0 ${t.width} 16`} aria-hidden="true">{t.icon}</svg>
                </TransportButton>
              ))}
            </Transport>
            <FeatureGrid>
              {features.map((f) => (
                <FeatureButton key={f}>{f}</FeatureButton>
              ))}
            </FeatureGrid>
            <Clock dateTime="2025-03-21T19:24:43">3/21/2025 7:24:43 PM</Clock>
            <LoadRow>
              <LoadBar />
              CPU HDSDR: 0%
            </LoadRow>
            <LoadRow>
              <LoadBar><LoadFill style={{ width: "13%" }} /></LoadBar>
              CPU Total: 13%
            </LoadRow>
          </Radio>

          <Displays>
            <Controls name="RF" rbw="RBW 30.5 Hz" avg="2" values={[21, 55, 93, 47, 20, 64]} />
            <AfPanel>
              <Plot $height={147}>
                <HeatMap width={686} height={147} cell={1} heat={afHeat} />
              </Plot>
              <AfRuler>
                <AfTicks>
                  <Ticks width={686} height={8} first={0} pitch={11.44} majorEvery={10} midEvery={5} />
                </AfTicks>
                <AfLabels>
                  {afLabels.map((l) => (
                    <RulerLabel key={l} $pitch="16.63%">{l}</RulerLabel>
                  ))}
                </AfLabels>
              </AfRuler>
              <Plot $height={169}>
                <Trace
                  width={686}
                  height={169}
                  id="af-fill"
                  points={afPoints}
                  gradient={[[0, "#108010"], [0.5, "#067a0e"], [0.66, "#06602c"], [0.8, "#063858"], [0.94, "#00107c"], [1, "#00008a"]]}
                  grid={[5, 26, 47, 67, 88, 109, 129, 150]}
                >
                  <path d="M12 0L9 70L8 120L4 150L3 169M288 0L290 68L292 110L295 150L297 169" fill="none" stroke="#d01020" />
                  <path d="M296 160v9" stroke="#f01818" strokeWidth="2" />
                </Trace>
                <LevelLabels $top={2} $height={158}>
                  {["-20", "-30", "-40", "-50", "-60", "-70", "-80", "-90"].map((l) => (
                    <li key={l}>{l}</li>
                  ))}
                </LevelLabels>
                <Readout $color="#c8d81c">{"AF  -6 dBFS"}</Readout>
              </Plot>
            </AfPanel>
            <Controls name="AF" rbw="RBW  5.9 Hz" avg="1" values={[22, 55, 52, 36, 0, 64]} />
          </Displays>
        </Console>
      </Shell>
    </Page>
  );
}
